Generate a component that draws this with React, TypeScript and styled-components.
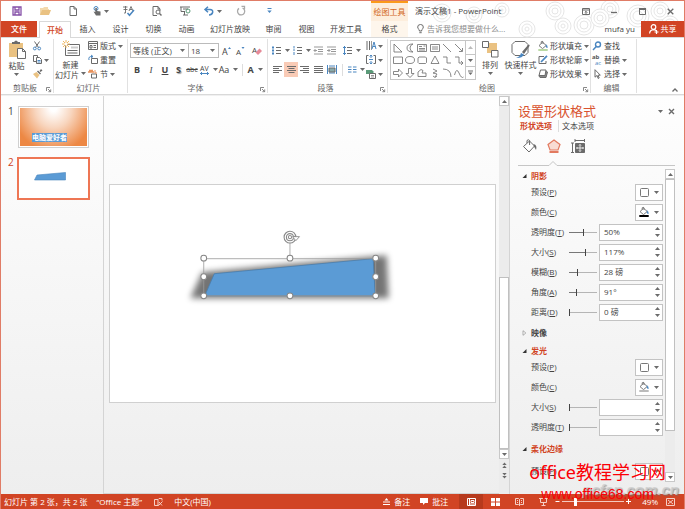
import React from "react";
import styled, { createGlobalStyle, css } from "styled-components";

const RED = "#d14424";
const BLUE = "#4a86c0";
const GREY = "#6b6b6b";
const TAN = "#eac282";

const Global = createGlobalStyle`
  *, *::before, *::after { box-sizing: border-box; }
  body { margin: 0; overflow: hidden; }
  body, button, input, select {
    font-family: "Open Sans", "Noto Sans CJK SC", sans-serif;
    font-size: 8px;
    line-height: 10px;
    color: #444;
  }
  button { background: none; border: 0; padding: 0; cursor: pointer; white-space: nowrap; }
  svg { display: block; flex: none; overflow: visible; }
`;

/* ---------- window ---------- */
const Window = styled.div`
  display: flex;
  flex-direction: column;
  height: 100vh;
  border: 1px solid #e07c66;
  border-bottom: 0;
  background: #fff;
  position: relative;
  overflow: hidden;
`;
const Header = styled.header`
  position: relative;
  flex: none;
`;
const Pattern = styled.svg`
  position: absolute;
  right: 0;
  top: 0;
  z-index: 0;
`;
const TitleBar = styled.div`
  position: relative;
  display: flex;
  align-items: stretch;
  height: 20px;
`;
const QuickAccess = styled.div`
  display: flex;
  width: 370px;
  padding-left: 2px;
`;
const QuickButton = styled.button`
  width: 28px;
  display: flex;
  align-items: center;
  justify-content: center;
  gap: 3px;
`;
const ContextTitle = styled.div`
  width: 37px;
  border-top: 2px solid #fb9a1c;
  background: #fdeedd;
  color: #d2691e;
  text-align: center;
  line-height: 17px;
  white-space: nowrap;
`;
const DocTitle = styled.div`
  flex: 1;
  padding-left: 7px;
  line-height: 20px;
  white-space: nowrap;
`;
const WindowButtons = styled.div`
  display: flex;
`;

const TabBar = styled.nav`
  position: relative;
  display: flex;
  height: 16px;
`;
const FileTab = styled.button`
  width: 36px;
  margin-right: 2px;
  background: ${RED};
  color: #fff;
  font-weight: 500;
`;
const Tab = styled.button<{ $active?: boolean; $context?: boolean }>`
  min-width: 33px;
  padding: 0 7px;
  position: relative;
  ${(p) =>
    p.$active &&
    css`
      min-width: 32px;
      height: 17px;
      z-index: 1;
      border: 1px solid #d9d9d9;
      border-bottom: 0;
      background: #fff;
      color: ${RED};
      font-weight: 500;
    `}
  ${(p) =>
    p.$context &&
    css`
      min-width: 37px;
      margin-left: 2px;
      background: #fef6ec;
    `}
`;
const TellMe = styled.label`
  flex: 1;
  display: flex;
  align-items: center;
  gap: 3px;
  padding-left: 9px;
  input {
    flex: 1;
    min-width: 0;
    border: 0;
    padding: 0;
    background: none;
    outline: 0;
  }
  input::placeholder { color: #8a8a8a; opacity: 1; }
`;
const Account = styled.button`
  padding: 0 6px;
`;
const Share = styled.button`
  width: 43px;
  display: flex;
  align-items: center;
  justify-content: center;
  gap: 2px;
  background: ${RED};
  color: #fff;
`;

/* ---------- ribbon ---------- */
const Ribbon = styled.div`
  flex: none;
  display: flex;
  height: 58px;
  border-top: 1px solid #d9d9d9;
  border-bottom: 1px solid #d9d9d9;
  background: #fff;
`;
const GroupBox = styled.section<{ $w: number }>`
  width: ${(p) => p.$w}px;
  flex: none;
  display: flex;
  flex-direction: column;
  margin: 1px 0;
  border-right: 1px solid #e1e1e1;
`;
const GroupContent = styled.div`
  display: flex;
  height: 44px;
`;
const GroupFooter = styled.div`
  position: relative;
  flex: 1;
  display: flex;
  align-items: center;
  justify-content: center;
  color: #666;
  padding-right: 4px;
`;
const Launcher = styled.button`
  position: absolute;
  right: 2px;
  bottom: 1px;
`;
const BigButton = styled.button<{ $w: number }>`
  width: ${(p) => p.$w}px;
  display: flex;
  flex-direction: column;
  align-items: center;
  padding-top: 1px;
  line-height: 9px;
  svg:first-child { margin-bottom: 2px; }
`;
const BigCaretLine = styled.span`
  display: flex;
  align-items: center;
  gap: 2px;
  height: 10px;
`;
const Column = styled.div<{ $w?: number }>`
  ${(p) => p.$w && `width: ${p.$w}px;`}
  display: grid;
  grid-template-rows: repeat(3, 14px);
`;
const SmallButton = styled.button`
  display: flex;
  align-items: center;
  gap: 2px;
  padding-left: 1px;
`;
const ToolRows = styled.div`
  display: grid;
  grid-template-rows: 19px 19px;
  padding: 2px 0 0 2px;
`;
const ToolRow = styled.div`
  display: flex;
  align-items: center;
`;
const Tool = styled.button<{ $w: number; $on?: boolean }>`
  width: ${(p) => p.$w}px;
  height: 15px;
  display: flex;
  align-items: center;
  justify-content: center;
  gap: 4px;
  background: ${(p) => (p.$on ? "#f9cbb6" : "none")};
`;
const Glyph = styled.span<{ $kind?: string }>`
  font-size: ${(p) => (p.$kind === "strike" ? 7 : 9)}px;
  color: #444;
  font-weight: ${(p) => (p.$kind === "plain" || p.$kind === "italic" || p.$kind === "strike" ? 400 : 700)};
  font-style: ${(p) => (p.$kind === "italic" ? "italic" : "normal")};
  font-family: ${(p) => (p.$kind === "italic" ? '"Liberation Serif", serif' : "inherit")};
  text-decoration: ${(p) => (p.$kind === "under" ? "underline" : p.$kind === "strike" ? "line-through" : "none")};
  text-shadow: ${(p) => (p.$kind === "shadow" ? "1px 1px 1px #999" : "none")};
`;
const ThinRule = styled.span`
  width: 1px;
  height: 12px;
  margin: 0 4px;
  background: #ddd;
`;
const Combo = styled.span<{ $w: number }>`
  width: ${(p) => p.$w}px;
  height: 15px;
  display: grid;
  align-items: center;
  border: 1px solid #bbb;
  margin-right: -1px;
  select, svg { grid-area: 1 / 1; }
  select {
    width: 100%;
    appearance: none;
    border: 0;
    background: none;
    padding: 0 0 0 2px;
    height: 13px;
  }
  svg { justify-self: end; margin-right: 3px; pointer-events: none; }
`;
const Gallery = styled.div`
  width: 86px;
  height: 40px;
  margin: 1px 0 0 2px;
  display: flex;
  border: 1px solid #c6c6c6;
`;
const GalleryGrid = styled.div`
  flex: 1;
  display: grid;
  grid-template: repeat(3, 1fr) / repeat(6, 1fr);
  place-items: center;
`;
const GallerySteps = styled.div`
  width: 10px;
  display: grid;
  grid-template-rows: repeat(3, 1fr);
  button { border-left: 1px solid #c6c6c6; display: grid; place-items: center; }
  button + button { border-top: 1px solid #c6c6c6; }
`;
const RibbonEnd = styled.div`
  flex: 1;
  display: flex;
  align-items: flex-end;
  justify-content: flex-end;
  padding: 0 6px 2px 0;
  border-right: 0;
`;

/* ---------- body ---------- */
const Body = styled.main`
  flex: 1;
  min-height: 0;
  display: flex;
  border-top: 1px solid #f0f0f0;
  background: linear-gradient(#fefefe, #eeeeee);
`;
const Thumbs = styled.aside`
  width: 103px;
  flex: none;
  border-right: 1px solid #d4d4d4;
  padding: 10px 0 0 7px;
  display: flex;
  flex-direction: column;
  gap: 9px;
`;
const ThumbRow = styled.button<{ $on?: boolean }>`
  display: grid;
  grid-template-columns: 9px 73px;
  text-align: left;
  align-items: start;
  font-size: 10px;
  color: ${(p) => (p.$on ? RED : "#444")};
`;
const ThumbFrame = styled.span<{ $on?: boolean }>`
  display: block;
  margin: ${(p) => (p.$on ? 0 : "0 1px")};
  border: ${(p) => (p.$on ? "2px solid #ee7654" : "1px solid #d0d0d0")};
  padding: ${(p) => (p.$on ? 0 : 1)}px;
  background: #fff;
`;
const ThumbFace = styled.span<{ $warm?: boolean }>`
  display: flex;
  align-items: flex-end;
  justify-content: center;
  aspect-ratio: 69 / 39;
  padding: 0 8px 4px 0;
  background: ${(p) => (p.$warm ? "radial-gradient(ellipse 60% 115% at 50% 0, #ffffff 8%, #f8d6bf 45%, #ed8844 100%)" : "#fff")};
`;
const SelectedText = styled.span`
  background: #5b9bd5;
  color: #fff;
  font-size: 7px;
  line-height: 9px;
  font-weight: 700;
`;
const Canvas = styled.div`
  flex: 1;
  min-width: 0;
  display: flex;
  align-items: center;
  padding: 0 3px 2px 5px;
  border-bottom: 1px solid #d4d4d4;
`;
const Slide = styled.div`
  width: 100%;
  border: 1px solid #d0d0d0;
  background: #fff;
  svg { width: 100%; height: auto; }
`;
const VBar = styled.div`
  width: 10px;
  flex: none;
  display: flex;
  flex-direction: column;
  background: #ececec;
`;
const ScrollButton = styled.button<{ $plain?: boolean }>`
  height: ${(p) => (p.$plain ? 11 : 10)}px;
  flex: none;
  display: grid;
  place-items: center;
  border: ${(p) => (p.$plain ? "0" : "1px solid #c8c8c8")};
  background: ${(p) => (p.$plain ? "none" : "#fff")};
`;
const BarEnd = styled.span`
  height: 13px;
  flex: none;
`;
const Trough = styled.div<{ $grow: number; $thumb?: boolean }>`
  flex: ${(p) => p.$grow} 1 0;
  ${(p) => p.$thumb && "background: #fff; border: 1px solid #c0c0c0;"}
`;

/* ---------- task pane ---------- */
const Pane = styled.aside`
  width: 175px;
  flex: none;
  display: flex;
  flex-direction: column;
  border-left: 1px solid #d4d4d4;
  padding: 7px 9px 12px 8px;
`;
const PaneHead = styled.div`
  display: flex;
  align-items: center;
  gap: 5px;
  h2 { flex: 1; margin: 0; font-size: 13px; line-height: 17px; font-weight: 400; color: #d9532f; }
`;
const PaneTabs = styled.div`
  display: flex;
  padding-left: 2px;
  height: 12px;
`;
const PaneTab = styled.button<{ $on?: boolean }>`
  width: 38px;
  text-align: left;
  color: ${(p) => (p.$on ? RED : "#444")};
  font-weight: ${(p) => (p.$on ? 700 : 400)};
  & + & { border-left: 1px solid #ddd; padding-left: 3px; }
`;
const PaneIcons = styled.div`
  display: flex;
  align-items: center;
  height: 28px;
  button { width: 24px; display: grid; place-items: center; }
`;
const PaneRule = styled.svg`
  width: 100%;
  height: 7px;
`;
const PaneScroll = styled.div`
  flex: 1;
  min-height: 0;
  display: flex;
  padding-top: 2px;
  justify-content: space-between;
`;
const PaneContent = styled.div`
  flex: 1;
  min-width: 0;
  overflow: hidden;
  padding-right: 2px;
`;
const SectionHead = styled.button<{ $h: number; $open?: boolean }>`
  width: 100%;
  height: ${(p) => p.$h}px;
  display: flex;
  align-items: center;
  gap: 4px;
  padding-left: 4px;
  font-weight: 700;
  color: ${(p) => (p.$open ? RED : "#444")};
`;
const Row = styled.div`
  height: 20px;
  display: flex;
  align-items: center;
  padding-left: 13px;
  label { width: 38px; flex: none; white-space: nowrap; }
`;
const Spread = styled.span`
  flex: 1;
`;
const SwatchButton = styled.button`
  width: 28px;
  height: 17px;
  display: flex;
  align-items: center;
  justify-content: center;
  gap: 5px;
  border: 1px solid #c3c3c3;
  background: #fff;
`;
const Range = styled.input<{ $track: number }>`
  appearance: none;
  width: 28px;
  height: 9px;
  margin: 0;
  background: linear-gradient(90deg, #777 ${(p) => p.$track}%, #b5b5b5 ${(p) => p.$track}%) center / 100% 1px no-repeat;
  &::-webkit-slider-thumb {
    appearance: none;
    width: 1px;
    height: 7px;
    background: #444;
  }
`;
const Spin = styled.span`
  width: 64px;
  height: 17px;
  display: flex;
  border: 1px solid #c3c3c3;
  background: #fff;
  input { flex: 1; min-width: 0; border: 0; padding: 0 0 0 4px; background: none; outline: 0; }
`;
const SpinSteps = styled.span`
  width: 10px;
  display: grid;
  grid-template-rows: 1fr 1fr;
  button { display: grid; place-items: center; }
`;

/* ---------- status bar ---------- */
const Status = styled.footer`
  flex: none;
  height: 15px;
  display: flex;
  align-items: center;
  padding: 0 10px 0 4px;
  background: ${RED};
  margin: 0 -1px;
  white-space: nowrap;
  color: #fff;
  button { color: #fff; }
`;
const StatusItem = styled.button<{ $gap?: number }>`
  display: flex;
  align-items: center;
  gap: 4px;
  margin-right: ${(p) => p.$gap ?? 11}px;
`;
const ViewButton = styled.button<{ $on?: boolean }>`
  width: 24px;
  height: 15px;
  display: grid;
  place-items: center;
  background: ${(p) => (p.$on ? "#b73a1d" : "none")};
`;
const ZoomRange = styled.input`
  appearance: none;
  width: 62px;
  height: 9px;
  margin: 0 2px;
  background: linear-gradient(#f4c9be, #f4c9be) center / 100% 1px no-repeat;
  &::-webkit-slider-thumb { appearance: none; width: 3px; height: 8px; background: #fff; }
`;

/* ---------- overlay stamp ---------- */
const Stamp = styled.div`
  position: absolute;
  right: 18px;
  bottom: 7px;
  display: flex;
  flex-direction: column;
  align-items: center;
  color: #fb0007;
  pointer-events: none;
  font-family: "Noto Sans", "Noto Sans CJK SC", sans-serif;
  strong { font-size: 18px; line-height: 28px; font-weight: 400; }
  span { font: 14px/16px "Liberation Sans", sans-serif; }
`;
const SiteMark = styled.div`
  position: absolute;
  right: 5px;
  bottom: 10px;
  font: italic 700 15px/18px "Liberation Sans", sans-serif;
  color: rgba(205, 205, 205, 0.8);
  text-shadow: 1px 1px 1px rgba(110, 110, 110, 0.6);
  pointer-events: none;
`;

/* ---------- drawings ---------- */
type IcoProps = { w?: number; h?: number; c?: string; sw?: number; children: React.ReactNode };
const Ico = ({ w = 10, h = 10, c = GREY, sw = 1, children }: IcoProps) => (
  <svg width={w} height={h} viewBox={`0 0 ${w} ${h}`} fill="none" stroke={c} strokeWidth={sw} aria-hidden="true">
    {children}
  </svg>
);
const Caret = ({ up, c = GREY }: { up?: boolean; c?: string }) => (
  <svg width="5" height="3" viewBox="0 0 5 3" aria-hidden="true">
    <path d={up ? "M0 3h5L2.500 0z" : "M0 0h5L2.500 3z"} fill={c} />
  </svg>
);
const LauncherIcon = () => (
  <Ico w={5} h={5} sw={0.8}>
    <path d="M.5 4V.5H4M2 2l2.500 2.500M4.700 2.400v2.300H2.400" />
  </Ico>
);
const Lines = ({ d, w = 9 }: { d: string; w?: number }) => (
  <Ico w={w} h={9}>
    <path d={d} />
  </Ico>
);
const Bucket = ({ s = 10, bar }: { s?: number; bar?: string }) => (
  <svg width={s} height={s} viewBox="0 0 10 10" fill="none" stroke={GREY} strokeWidth=".9" aria-hidden="true">
    <path d="M1 4.600 4.600 1.200l3.600 3.300-3.700 3.100zM3.200 2.600V.8q1-1 1.800 0V3" fill="#fff" />
    <path d="M7.800 3.400q2 .8 1.400 3.600l-1.300-1.600" fill={BLUE} stroke={BLUE} strokeWidth=".5" />
    {bar && <path d="M.3 9h9.400" stroke={bar} strokeWidth="2" />}
  </svg>
);

const quick: { name: string; icon: React.ReactNode; caret?: boolean }[] = [
  { name: "保存", icon: <Ico c="#8550a8" sw={1.3}><path d="M1 1h8v8H1zM3 1v3h4V1M3 9V6h4v3" /></Ico> },
  { name: "打开", icon: <Ico c="none"><path d="M0 9V2h3l1-1h4v2h1v2z" fill="#f3d9ad" /><path d="m0 9 2-5h9L9 9z" fill={TAN} /></Ico> },
  { name: "新建", icon: <Ico w={8}><path d="M1 .5h4L7.500 3v6.500H1zM5 .5V3h2.500" /></Ico> },
  { name: "触摸", caret: true, icon: <Ico w={8}><circle cx="3" cy="2.500" r="2" stroke={BLUE} /><path d="M2.300 2v4L.5 5.500 3 9.500h4.500V5.500L3.900 5V2z" fill={GREY} stroke="none" /></Ico> },
  { name: "拼写检查", icon: <Ico w={12} sw={0.9}><path d="M0 1h4.500M2.500 0v2M.5 3.500h4M2.500 2v5H1M6 5l2-4.500L10 5M7 3.500h2" /><path d="m4.500 7 2 2.300L11 4" stroke={BLUE} strokeWidth="1.500" /></Ico> },
  { name: "打印预览", icon: <Ico><path d="M1 .5h5L8 3v2M1 .5v9h4M6 .5V3h2" /><circle cx="6" cy="6" r="2" /><path d="m7.500 7.500 2 2" strokeWidth="1.500" /></Ico> },
  { name: "放映", icon: <Ico w={11}><path d="M0 1h10M1 1v4.500h4M3 9h5M4.500 6v3M3 3h5" /><circle cx="8" cy="5" r="2" stroke="#5a9a78" /></Ico> },
  { name: "撤消", caret: true, icon: <Ico w={10} c={BLUE} sw={1.5}><path d="M1 3.500h5q3 .3 2.700 2.800Q8 9 5 9M4 .7 1 3.500 4 6.300" /></Ico> },
  { name: "恢复", icon: <Ico c="#aaa" sw={1.3}><path d="M6.500 2A3.600 3.600 0 1 1 3 2.400M5.500.3h3v3" /></Ico> },
  { name: "自定义", icon: <Ico w={5} h={6} c={BLUE}><path d="M.5.5h4" /><path d="M.3 2.500h4.400L2.500 5z" fill={BLUE} stroke="none" /></Ico> },
];

const shapes = [
  "M1 1v8h8z", "M8 1Q2 1 2 5t6 4Q5 8 5 5t3-4z", "M.5 1.500h9v7h-9zM2 3.500h3M2 5.500h6M2 7h6M6.500 3h2", "M.5 1.500h9v7h-9zM3 3v4M5 3v4M7 3v4", "m1 1 8 8", "m1 1 7 7M8.500 5v3.500H5",
  "M.5 2h9v6.500h-9z", "M.5 5a4.500 3.500 0 1 0 9 0a4.500 3.500 0 1 0-9 0z", "M2 2h6.500l1 1v4.500l-1 1H2l-1-1V3z", "M5 1 9 8.500H1z", "M1 2h4v6h4", "M1 2h4v6h4M7 6l2 2-2 2",
  "M.5 3.500h5V1L9.500 5l-4 4V6.500h-5z", "M3.500.5h3v5H9L5 9.500 1 5.500h2.500z", "M1 8.500V4l3-2.500 2 1L5 5h4v3.500z", "M3 1 7 3 3 5l4 1-2 3M3 8l2 1.500L7 8", "M1 1q8 0 8 8", "M.5 7q2-8 4.500-2t4.500 4",
];
const DrawingSlide = () => (
  <svg viewBox="0 0 384 217" role="img" aria-label="幻灯片形状">
    <defs>
      <filter id="soft" x="-20%" y="-60%" width="140%" height="220%">
        <feGaussianBlur stdDeviation="3.2" />
      </filter>
    </defs>
    <path d="M80 113 92 87 276 70 278 113z" fill="#000" opacity=".54" filter="url(#soft)" />
    <path d="M94.500 110.500 104 88.500 262.500 73.500 264.500 110.500z" fill="#5b9bd5" stroke="#4a7eae" strokeWidth=".8" />
    <path d="M93.500 73.500h171.500v37H93.500zM179.500 55v18" fill="none" stroke="#9a9a9a" strokeWidth=".8" />
    {[[93.5, 73], [179.5, 73], [265, 73], [93.5, 91.5], [265, 91.5], [93.5, 110.5], [179.5, 110.5], [265, 110.5]].map(([x, y]) => (
      <circle key={`${x}-${y}`} cx={x} cy={y} r="2.900" fill="#fff" stroke="#868686" />
    ))}
    <circle cx="179.500" cy="52" r="4.700" fill="none" stroke="#8a8a8a" strokeWidth="3.400" />
    <path d="M184.200 52a4.700 4.700 0 1 1-4.700-4.700 4.700 4.700 0 0 1 4.500 3.500" fill="none" stroke="#fff" strokeWidth="1.200" />
    <path d="M182 51.500h7l-3.600 4z" fill="#fff" stroke="#8a8a8a" strokeWidth=".9" />
    <circle cx="179.500" cy="52" r="1.600" fill="none" stroke="#8a8a8a" strokeWidth="1" />
  </svg>
);

type GroupProps = { name: string; w: number; launcher?: boolean; children: React.ReactNode };
const Group = ({ name, w, launcher, children }: GroupProps) => (
  <GroupBox $w={w} aria-label={name}>
    <GroupContent>{children}</GroupContent>
    <GroupFooter>
      {name}
      {launcher && <Launcher aria-label={`${name}设置`}><LauncherIcon /></Launcher>}
    </GroupFooter>
  </GroupBox>
);

const Small = ({ icon, text, caret }: { icon: React.ReactNode; text?: string; caret?: boolean }) => (
  <SmallButton aria-label={text ?? "工具"}>
    {icon}
    {text}
    {caret && <Caret />}
  </SmallButton>
);

const Key = ({ k }: { k: string }) => <>({<u>{k}</u>})</>;

const SliderRow = ({ id, text, k, pos, value }: { id: string; text: string; k: string; pos: number; value: string }) => (
  <Row>
    <label htmlFor={id}>{text}<Key k={k} /></label>
    <Range type="range" $track={pos} defaultValue={pos} aria-label={`${text}滑块`} />
    <Spread />
    <Spin>
      <input id={id} defaultValue={value} />
      <SpinSteps>
        <button aria-label="增加"><Caret up /></button>
        <button aria-label="减少"><Caret /></button>
      </SpinSteps>
    </Spin>
  </Row>
);
const SwatchRow = ({ id, text, k, icon }: { id: string; text: string; k: string; icon: React.ReactNode }) => (
  <Row>
    <label htmlFor={id}>{text}<Key k={k} /></label>
    <Spread />
    <SwatchButton id={id}>{icon}<Caret /></SwatchButton>
  </Row>
);
const Section = ({ text, open, h }: { text: string; open?: boolean; h: number }) => (
  <SectionHead $h={h} $open={open} aria-expanded={!!open}>
    <svg width="5" height="6" viewBox="0 0 5 6" aria-hidden="true">
      {open ? <path d="M4.500 1v4H.5z" fill="#333" /> : <path d="M1 .7v4.600L3.800 3z" fill="#fff" stroke="#999" strokeWidth=".8" />}
    </svg>
    {text}
  </SectionHead>
);
const PresetIcon = () => (
  <Ico w={9} h={9} c="#777"><rect x=".5" y=".5" width="8" height="8" rx="1" fill="#fff" /></Ico>
);

const rings: [number, number, number][] = [
  [18, 12, 9], [50, 14, 8], [78, 9, 7], [103, 28, 8], [131, 10, 9], [160, 24, 10], [186, 8, 9], [214, 15, 11], [236, 10, 9], [139, 25, 8], [176, 17, 9], [246, 24, 9],
];

const A = ["M0 1.500h9M0 3.500h6M0 5.500h9M0 7.500h6", "M0 1.500h9M1.500 3.500h6M0 5.500h9M1.500 7.500h6", "M0 1.500h9M3 3.500h6M0 5.500h9M3 7.500h6", "M0 1.500h9M0 3.500h9M0 5.500h9M0 7.500h9"];

export default function App() {
  return (
    <Window lang="zh-CN">
      <Global />
      <Header>
        <Pattern width="260" height="37" viewBox="0 0 260 37" fill="none" stroke="#e6e6e6" aria-hidden="true">
          {rings.map(([x, y, r]) => (
            <g key={x}>
              <circle cx={x} cy={y} r={r} fill="#fff" />
              <circle cx={x} cy={y} r={r - 3} />
              <circle cx={x} cy={y} r={r - 6} />
            </g>
          ))}
        </Pattern>
        <TitleBar>
          <QuickAccess>
            {quick.map((q) => (
              <QuickButton key={q.name} aria-label={q.name}>{q.icon}{q.caret && <Caret />}</QuickButton>
            ))}
          </QuickAccess>
          <ContextTitle>绘图工具</ContextTitle>
          <DocTitle>演示文稿1 - PowerPoint</DocTitle>
          <WindowButtons>
            <QuickButton aria-label="功能区显示选项"><Ico w={8} h={7}><path d="M.5.5h7v6h-7zM.5 2h7M4 6V3.500M2.700 4.600 4 3.300l1.300 1.300" /></Ico></QuickButton>
            <QuickButton aria-label="最小化"><Ico w={6} h={6}><path d="M0 4.500h6" strokeWidth="1.300" /></Ico></QuickButton>
            <QuickButton aria-label="最大化"><Ico w={7} h={7}><path d="M.5.5h6v6h-6z" /><path d="M0 1h7" strokeWidth="2" /></Ico></QuickButton>
            <QuickButton aria-label="关闭"><Ico w={7} h={7} sw={1.3}><path d="m.7.7 5.600 5.600M6.300.7.700 6.300" /></Ico></QuickButton>
          </WindowButtons>
        </TitleBar>
        <TabBar>
          <FileTab>文件</FileTab>
          <Tab $active>开始</Tab>
          {["插入", "设计", "切换", "动画", "幻灯片放映", "审阅", "视图", "开发工具"].map((t) => <Tab key={t}>{t}</Tab>)}
          <Tab $context>格式</Tab>
          <TellMe>
            <Ico w={7} h={10}><path d="M2.300 7V5.800Q.6 4.800.7 3a2.800 2.500 0 0 1 5.600 0q.1 1.800-1.600 2.800V7zM2.300 8.700h2.400" /></Ico>
            <input placeholder="告诉我您想要做什么..." aria-label="告诉我您想要做什么" />
          </TellMe>
          <Account>mufa yu</Account>
          <Share>
            <Ico w={10} h={10} c="#fff" sw={1.2}><circle cx="4.500" cy="3" r="2.300" /><path d="M.6 9.500q.2-3.500 3.900-3.800 2 0 2.600 1M5.500 8h4M7.500 6v4" /></Ico>
            共享
          </Share>
        </TabBar>
      </Header>

      <Ribbon>
        <Group name="剪贴板" w={53} launcher>
          <BigButton $w={31}>
            <Ico w={18} h={19} c="none">
              <path d="M1 3h14v14H1z" fill={TAN} /><path d="M4 4V2h2q2-3 4 0h2v2z" fill={GREY} />
              <path d="M9.500 8.500h5l3 3v7h-8z" fill="#fff" stroke={GREY} /><path d="M14.500 8.500v3h3" stroke={GREY} />
            </Ico>
            粘贴
            <BigCaretLine><Caret /></BigCaretLine>
          </BigButton>
          <Column>
            <Small icon={<Ico w={8}><path d="m1.500.5 4 6M6.500.5l-4 6" /><circle cx="1.800" cy="7.500" r="1.400" stroke={BLUE} /><circle cx="6.200" cy="7.500" r="1.400" stroke={BLUE} /></Ico>} />
            <Small caret icon={<Ico w={9}><path d="M.5.500h4v6h-4z" fill="#fff" /><path d="M3.500 2.500h3l2 2v4h-5z" fill="#fff" /><path d="M4.500 5.500h3M4.500 7h3" stroke={BLUE} /></Ico>} />
            <Small icon={<Ico w={9} c="none"><path d="m0 5 3.500-2 3 3L4 9.500z" fill={TAN} /><path d="m4 2.500 1-1 3 3-1 1zM6.500 2 8 0l1.500 1.500-2 1.500z" fill={GREY} /></Ico>} />
          </Column>
        </Group>

        <Group name="幻灯片" w={74}>
          <BigButton $w={33}>
            <Ico w={18} h={18}>
              <path d="M3.500 4.500h14v11h-14zM5.500 10.500h10M5.500 13h10" fill="#fff" /><path d="M9 6.500h7v2H9z" fill="#ccc" stroke="none" />
              <path d="M4 0v8M0 4h8M1 1l6 6M7 1 1 7" stroke="#f0b860" /><circle cx="4" cy="4" r="1.500" fill="#fff" stroke="none" />
            </Ico>
            新建
            <BigCaretLine>幻灯片<Caret /></BigCaretLine>
          </BigButton>
          <Column>
            <Small caret text="版式" icon={<Ico><path d="M.5.500h9v8h-9zM1 2.500h8M2 4.500h2v2.500H2zM5.500 4.500H8M5.500 6.500H8" /></Ico>} />
            <Small text="重置" icon={<Ico><path d="M3.500 3.500h6v5h-6z" /><path d="M1 5q-1-4 3.500-3.500M3 0l2 1.500L3 3" stroke={BLUE} /></Ico>} />
            <Small caret text="节" icon={<Ico><path d="M1 1.500h4M0 3h6" stroke="#e8925c" strokeWidth="1.500" /><path d="M3.500 5h5v4h-5z" /><path d="M7 1v3h2" stroke="#e8925c" /></Ico>} />
          </Column>
        </Group>

        <Group name="字体" w={140} launcher>
          <ToolRows>
            <ToolRow>
              <Combo $w={59}>
                <select aria-label="字体"><option>等线 (正文)</option></select><Caret />
              </Combo>
              <Combo $w={31}>
                <select aria-label="字号"><option>18</option></select><Caret />
              </Combo>
              <Tool $w={16} aria-label="增大字号"><Ico w={9}><text x="0" y="9" fontSize="9" fill="#444" stroke="none">A</text><path d="M6 3h3L7.500 1z" fill={BLUE} stroke="none" /></Ico></Tool>
              <Tool $w={13} aria-label="减小字号"><Ico w={9}><text x="0" y="9" fontSize="8" fill="#444" stroke="none">A</text><path d="M5.500 1h3L7 3z" fill={BLUE} stroke="none" /></Ico></Tool>
              <Tool $w={20} aria-label="清除格式"><Ico w={10}><text x="0" y="7" fontSize="8" fill="#444" stroke="none">A</text><path d="m3.500 6.500 4-4L10 5 6 9z" fill="#e68a98" stroke="none" /></Ico></Tool>
            </ToolRow>
            <ToolRow>
              <Tool $w={14}><Glyph>B</Glyph></Tool>
              <Tool $w={14}><Glyph $kind="italic">I</Glyph></Tool>
              <Tool $w={14}><Glyph $kind="under">U</Glyph></Tool>
              <Tool $w={13}><Glyph $kind="shadow">S</Glyph></Tool>
              <Tool $w={14}><Glyph $kind="strike">abc</Glyph></Tool>
              <Tool $w={20} aria-label="字符间距"><Ico w={9}><text x="0" y="6" fontSize="7" fill="#444" stroke="none">AV</text><path d="M0 8.500h9M2 7 .5 8.500 2 10M7 7l1.500 1.500L7 10" stroke={BLUE} /></Ico><Caret /></Tool>
              <Tool $w={19}><Glyph $kind="plain">Aa</Glyph><Caret /></Tool>
              <ThinRule />
              <Tool $w={16}><Glyph>A</Glyph><Caret /></Tool>
            </ToolRow>
          </ToolRows>
        </Group>

        <Group name="段落" w={120} launcher>
          <ToolRows>
            <ToolRow>
              <Tool $w={21} aria-label="项目符号"><Ico w={9} h={9}><path d="M4 1.500h5M4 4.500h5M4 7.500h5" /><path d="M0 1.500h2M0 4.500h2M0 7.500h2" stroke={BLUE} strokeWidth="2" /></Ico><Caret /></Tool>
              <Tool $w={21} aria-label="编号"><Ico w={9} h={9}><path d="M4 1.500h5M4 4.500h5M4 7.500h5" /><path d="M1 0v2.500M0 4h2M1 6v3" stroke={BLUE} /></Ico><Caret /></Tool>
              <Tool $w={13} aria-label="减少缩进"><Ico w={9} h={9}><path d="M0 1h9M4 3.500h5M4 5.500h5M0 8h9M3 4.500H0M1.500 3 0 4.500 1.500 6" stroke="#999" /></Ico></Tool>
              <Tool $w={13} aria-label="增加缩进"><Ico w={9} h={9}><path d="M0 1h9M4 3.500h5M4 5.500h5M0 8h9M0 4.500h3M1.500 3 3 4.500 1.500 6" stroke="#999" /></Ico></Tool>
              <Tool $w={27} aria-label="行距"><Ico w={9} h={9}><path d="M4 1.500h5M4 4.500h5M4 7.500h5" /><path d="M1.500 0v9M0 2 1.500.500 3 2M0 7l1.500 1.500L3 7" stroke={BLUE} /></Ico><Caret /></Tool>
            </ToolRow>
            <ToolRow>
              <Tool $w={14} aria-label="左对齐"><Lines d={A[0]} /></Tool>
              <Tool $w={14} $on aria-label="居中"><Lines d={A[1]} /></Tool>
              <Tool $w={13} aria-label="右对齐"><Lines d={A[2]} /></Tool>
              <Tool $w={14} aria-label="两端对齐"><Lines d={A[3]} /></Tool>
              <Tool $w={13} aria-label="分散对齐"><Ico w={10} h={9}><path d="M.5 0v9M9.500 0v9" stroke={BLUE} /><path d="M2 1h6M2 8h6" stroke={BLUE} /><path d="M2 3h6v4H2z" fill="#8aa" /></Ico></Tool>
              <ThinRule />
              <Tool $w={18} aria-label="分栏"><Ico w={8} h={8} c={BLUE}><path d="M0 1h3.500M0 3.500h3.500M0 6h3.500M5 1h3.500M5 3.500h3.500M5 6h3.500" /></Ico><Caret /></Tool>
            </ToolRow>
          </ToolRows>
          <Column>
            <Small caret icon={<Ico><path d="M1 0v9M3.500 0v9" /><path d="M5.500 0v9" stroke="#999" /><path d="m6 8 2-7 2 7M7 5.500h2.500" stroke={BLUE} /></Ico>} />
            <Small caret icon={<Ico><path d="M2.500.500h-2v8h2M7.500.500h2v8h-2" /><path d="M5 0v3M3.700 1.500 5 0l1.300 1.500M5 9V6M3.700 7.500 5 9l1.300-1.500M3 4.500h4" stroke={BLUE} /></Ico>} />
            <Small caret icon={<Ico c="none"><path d="M0 1h6l2 2-2 2H0z" fill="#5a9a78" /><path d="M3.500 4.500h6v5h-6z" fill="#fff" stroke={GREY} /><path d="M5 6.500h3M5 8h3" stroke="#999" /></Ico>} />
          </Column>
        </Group>

        <Group name="绘图" w={203} launcher>
          <Gallery>
            <GalleryGrid>
              {shapes.map((d, i) => <Ico key={i} w={9} h={9} sw={0.8}><path d={d} /></Ico>)}
            </GalleryGrid>
            <GallerySteps>
              <button aria-label="上一行"><Caret up c="#bbb" /></button>
              <button aria-label="下一行"><Caret /></button>
              <button aria-label="更多"><Ico w={5} h={6}><path d="M0 1h5" /><path d="M.3 2.500h4.400L2.500 5z" fill={GREY} stroke="none" /></Ico></button>
            </GallerySteps>
          </Gallery>
          <BigButton $w={28}>
            <Ico w={17} h={18}><path d="M5 3h10v10H5z" fill={TAN} stroke="none" /><path d="M.5 1.500h6v6h-6zM9.500 10.500h6.500v6.500H9.500z" fill="#fff" /></Ico>
            排列
            <BigCaretLine><Caret /></BigCaretLine>
          </BigButton>
          <BigButton $w={33}>
            <Ico w={19} h={18}><path d="M4 1.500h10l3 3v8l-3 3H4l-3-3v-8z" fill="#fff" /><path d="m11 12 6-7q2-1 1.500 1L13 14z" fill={GREY} stroke="none" /><path d="M5 18q4-1 5-5l3 1.500q-2 4-8 3.500z" fill={BLUE} stroke="none" /></Ico>
            快速样式
            <BigCaretLine><Caret /></BigCaretLine>
          </BigButton>
          <Column>
            <Small caret text="形状填充" icon={<Bucket bar="#b9d9a3" />} />
            <Small caret text="形状轮廓" icon={<Ico><path d="M6 1.500H1v7h7V6" /><path d="M3 7 9 .8" stroke={BLUE} strokeWidth="1.700" /></Ico>} />
            <Small caret text="形状效果" icon={<Ico><path d="M3 2h5l1.500 1L8 8.500H2L1 7z" fill="#888" /><path d="M2.500 1h5.500L7 6.500H1z" fill="#fff" /></Ico>} />
          </Column>
        </Group>

        <Group name="编辑" w={46}>
          <Column $w={46}>
            <Small text="查找" icon={<Ico c={BLUE} sw={1.4}><circle cx="6" cy="3.500" r="2.500" /><path d="M4.300 5.500 1 9" /></Ico>} />
            <Small caret text="替换" icon={<Ico><text x="0" y="4" fontSize="6" fontWeight="700" fill="#555" stroke="none">ab</text><text x="3" y="10" fontSize="6" fill={BLUE} stroke="none">ac</text></Ico>} />
            <Small caret text="选择" icon={<Ico><path d="M3 .7v7.500l2-1.700 1.200 3 1-.5L6 6.200h2.300z" fill="#fff" /></Ico>} />
          </Column>
        </Group>
        <RibbonEnd>
          <button aria-label="折叠功能区"><Ico w={6} h={4} sw={1.3}><path d="m.5 3.500 2.500-2.500L5.500 3.500" /></Ico></button>
        </RibbonEnd>
      </Ribbon>

      <Body>
        <Thumbs>
          <ThumbRow>
            1
            <ThumbFrame><ThumbFace $warm><SelectedText>电脑爱好者</SelectedText></ThumbFace></ThumbFrame>
          </ThumbRow>
          <ThumbRow $on>
            2
            <ThumbFrame $on>
              <ThumbFace>
                <svg width="32" height="35" viewBox="0 0 32 35" aria-hidden="true"><path d="M.5 21 3 16 31.500 13.500V21z" fill="#5b9bd5" stroke="#4a86bd" strokeWidth=".6" /></svg>
              </ThumbFace>
            </ThumbFrame>
          </ThumbRow>
        </Thumbs>
        <Canvas><Slide><DrawingSlide /></Slide></Canvas>
        <VBar>
          <ScrollButton aria-label="向上"><Caret up /></ScrollButton>
          <Trough $grow={172} />
          <Trough $grow={171} $thumb />
          <ScrollButton aria-label="向下"><Caret /></ScrollButton>
          <ScrollButton $plain aria-label="上一张"><Ico w={5} h={6}><path d="M.3 3h4.400L2.500.500zM.3 6h4.400L2.500 3.500z" fill={GREY} stroke="none" /></Ico></ScrollButton>
          <ScrollButton $plain aria-label="下一张"><Ico w={5} h={6}><path d="M.3 0h4.400L2.500 2.500zM.3 3h4.400L2.500 5.500z" fill={GREY} stroke="none" /></Ico></ScrollButton>
          <BarEnd />
        </VBar>
        <Pane>
          <PaneHead>
            <h2>设置形状格式</h2>
            <button aria-label="选项"><Caret /></button>
            <button aria-label="关闭"><Ico w={7} h={7} sw={1.4}><path d="m1 1 5 5M6 1 1 6" /></Ico></button>
          </PaneHead>
          <PaneTabs>
            <PaneTab $on>形状选项</PaneTab>
            <PaneTab>文本选项</PaneTab>
          </PaneTabs>
          <PaneIcons>
            <button aria-label="填充与线条">
              <Ico w={16} h={14}><path d="M1.500 7.500 7.500 2l5 5-5.500 6zM5 4V1.500q1.300-1.500 2.600 0V6" fill="#fff" /><path d="M11.500 5q4 1 2.500 6l-2-3.500" fill={GREY} stroke="none" /></Ico>
            </button>
            <button aria-label="效果">
              <Ico w={14} h={14} c="#e27a60" sw={1.2}><path d="M7 1 13 5.500 11 11H3L1 5.500z" fill="#f9dcd3" /><path d="M2.500 13h9" strokeWidth="2" /></Ico>
            </button>
            <button aria-label="大小与属性">
              <Ico w={14} h={14}><path d="M4 1.500h9.500M4 0v3M13.500 0v3M1.500 4v9.500M0 4h3M0 13.500h3" /><path d="M4.500 4.500h9v9h-9z" fill={GREY} /><path d="M9 5.500v7M5.500 9h7M8 6.500l1-1 1 1M8 11.500l1 1 1-1M6.500 8l-1 1 1 1M11.500 8l1 1-1 1" stroke="#fff" strokeWidth=".8" /></Ico>
            </button>
          </PaneIcons>
          <PaneRule viewBox="0 0 157 7" preserveAspectRatio="none" fill="none" stroke="#c6c6c6" aria-hidden="true">
            <path d="M0 5.500h31l4-4 4 4h118" />
          </PaneRule>
          <PaneScroll>
            <PaneContent>
              <Section text="阴影" open h={13} />
              <SwatchRow id="shadow-preset" text="预设" k="P" icon={<PresetIcon />} />
              <SwatchRow id="shadow-color" text="颜色" k="C" icon={<Bucket bar="#000" />} />
              <SliderRow id="shadow-alpha" text="透明度" k="T" pos={50} value="50%" />
              <SliderRow id="shadow-size" text="大小" k="S" pos={60} value="117%" />
              <SliderRow id="shadow-blur" text="模糊" k="B" pos={30} value="28 磅" />
              <SliderRow id="shadow-angle" text="角度" k="A" pos={26} value="91°" />
              <SliderRow id="shadow-distance" text="距离" k="D" pos={0} value="0 磅" />
              <Section text="映像" h={22} />
              <Section text="发光" open h={13} />
              <SwatchRow id="glow-preset" text="预设" k="P" icon={<PresetIcon />} />
              <SwatchRow id="glow-color" text="颜色" k="C" icon={<Bucket bar="#bbb" />} />
              <SliderRow id="glow-size" text="大小" k="S" pos={0} value="" />
              <SliderRow id="glow-alpha" text="透明度" k="T" pos={0} value="" />
              <Section text="柔化边缘" open h={24} />
              <SwatchRow id="soft-preset" text="预设" k="P" icon={<PresetIcon />} />
            </PaneContent>
            <VBar>
              <ScrollButton aria-label="向上滚动"><Caret up /></ScrollButton>
              <Trough $grow={252} $thumb />
              <Trough $grow={41} />
              <ScrollButton aria-label="向下滚动"><Caret /></ScrollButton>
            </VBar>
          </PaneScroll>
        </Pane>
      </Body>

      <Status>
        <StatusItem $gap={9}>幻灯片 第 2 张，共 2 张</StatusItem>
        <StatusItem $gap={12}>“Office 主题”</StatusItem>
        <StatusItem aria-label="拼写检查"><Ico w={9} h={8} c="#f6cfc5"><path d="M4 7.500H.5v-6H4v6L5 7M4 1.500 5 .500h3v2M5 4l3 3.500M8.500 3.500 5 7" /></Ico></StatusItem>
        <StatusItem>中文(中国)</StatusItem>
        <Spread />
        <StatusItem $gap={10}><Ico w={7} h={7} c="#fff"><path d="M0 4h7M0 6.500h7" /><path d="M1.500 2.500h4L3.500 0z" fill="#fff" stroke="none" /></Ico>备注</StatusItem>
        <StatusItem><Ico w={8} h={7} c="none"><path d="M0 0h8v5H5L3 7V5H0z" fill="#fff" /></Ico>批注</StatusItem>
        <ViewButton $on aria-label="普通视图"><Ico w={9} h={8} c="#fff"><path d="M.5.500h8v7h-8zM2.500 1v6M4 2.500h3v2H4zM3 6h5" /></Ico></ViewButton>
        <ViewButton aria-label="幻灯片浏览"><Ico w={9} h={8} c="none"><path d="M0 0h4v3.500H0zM5 0h4v3.500H5zM0 4.500h4V8H0zM5 4.500h4V8H5z" fill="#fff" /></Ico></ViewButton>
        <ViewButton aria-label="阅读视图"><Ico w={9} h={8} c="#f6cfc5"><path d="M4.500 1.500 3.500.500h-3v6h3l1 1 1-1h3v-6h-3zM4.500 1.500v6M2 2.500h1M2 4.500h1M6 2.500h1M6 4.500h1" /></Ico></ViewButton>
        <ViewButton aria-label="幻灯片放映视图"><Ico w={9} h={8} c="#f6cfc5"><path d="M0 .500h9M1.500 1v3.500h6V1M4.500 4.500V7M2.500 7.500h4" /></Ico></ViewButton>
        <button aria-label="缩小"><Ico w={5} h={5} c="#fff"><path d="M.5 2.500h4" /></Ico></button>
        <ZoomRange type="range" defaultValue={20} aria-label="缩放" />
        <StatusItem aria-label="放大"><Ico w={5} h={5} c="#fff"><path d="M0 2.500h5M2.500 0v5" /></Ico></StatusItem>
        <StatusItem $gap={8}>49%</StatusItem>
        <button aria-label="适应窗口"><Ico w={9} h={8} c="#f6cfc5"><path d="M.5.500h8v7h-8zM2 2l5 4M7 2 2 6" /></Ico></button>
      </Status>

      <SiteMark>pcfan.com.cn</SiteMark>
      <Stamp>
        <strong>office教程学习网</strong>
        <span>www.office68.com</span>
      </Stamp>
    </Window>
  );
}
